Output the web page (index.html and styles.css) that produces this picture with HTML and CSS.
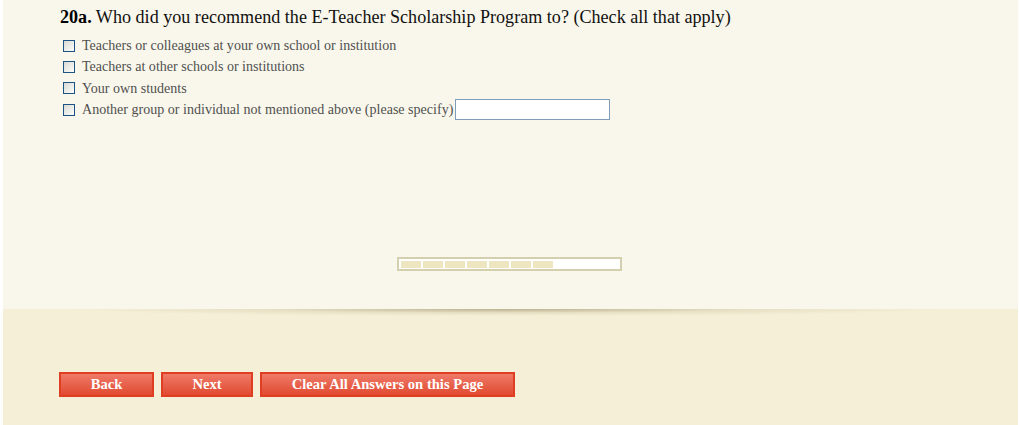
FILE: index.html
```html
<!DOCTYPE html>
<html>
<head>
<meta charset="utf-8">
<link rel="stylesheet" href="styles.css">
</head>
<body>
<div class="page">
  <div class="survey">
    <div class="question">
      <div class="qtitle"><b>20a.</b> Who did you recommend the E-Teacher Scholarship Program to? (Check all that apply)</div>
      <div class="options">
        <label class="opt"><span class="box"></span>Teachers or colleagues at your own school or institution</label>
        <label class="opt"><span class="box"></span>Teachers at other schools or institutions</label>
        <label class="opt"><span class="box"></span>Your own students</label>
        <label class="opt"><span class="box"></span>Another group or individual not mentioned above (please specify)<span class="textin"></span></label>
      </div>
    </div>
    <div class="progress">
      <span class="seg"></span><span class="seg"></span><span class="seg"></span><span class="seg"></span><span class="seg"></span><span class="seg"></span><span class="seg"></span>
    </div>
  </div>
  <div class="footer">
    <div class="shadow"></div>
    <div class="buttons">
      <span class="btn back">Back</span>
      <span class="btn next">Next</span>
      <span class="btn clear">Clear All Answers on this Page</span>
    </div>
  </div>
</div>
</body>
</html>
```

FILE: styles.css
```css
html, body {
  margin: 0;
  padding: 0;
  background: #ffffff;
  height: 425px;
  overflow: hidden;
}
.page {
  margin: 0 2px 0 3px;
  height: 425px;
  display: flex;
  flex-direction: column;
  font-family: "Liberation Serif", "Times New Roman", serif;
}
.survey {
  background: #f9f7eb;
  height: 309px;
  box-sizing: border-box;
  padding: 6px 0 0 57px;
  display: flex;
  flex-direction: column;
}
.qtitle {
  font-size: 18.1px;
  color: #111;
  line-height: 22px;
}
.qtitle b { color: #000; }
.options {
  margin-top: 7px;
  display: flex;
  flex-direction: column;
}
.opt {
  display: flex;
  align-items: center;
  height: 21.3px;
  font-size: 14.05px;
  color: #505050;
  padding-left: 3px;
}
.box {
  width: 10px;
  height: 10px;
  border: 1px solid #1d5384;
  background: linear-gradient(135deg, #d9d9d4, #fdfdfb);
  margin-right: 7px;
  flex: none;
}
.textin {
  display: inline-block;
  width: 153px;
  height: 19px;
  border: 1px solid #7f9db9;
  background: #fff;
  margin-left: 2px;
}
.progress {
  margin: 137px 0 0 337px;
  width: 219px;
  height: 10px;
  border: 2px solid #d4cfad;
  background: #fff;
  padding: 0 0 0 2px;
  display: flex;
  align-items: center;
  gap: 2px;
}
.seg {
  width: 20px;
  height: 7px;
  background: #ede6c1;
}
.footer {
  background: #f5efd7;
  flex: 1;
  display: flex;
  flex-direction: column;
}
.shadow {
  height: 7px;
  margin: 0 70px 0 60px;
  background: radial-gradient(ellipse 50% 100% at 50% 0, rgba(160, 150, 110, 0.7), rgba(190, 180, 140, 0.25) 55%, rgba(245, 239, 215, 0) 100%);
}
.buttons {
  margin-top: 56px;
  padding-left: 56px;
  display: flex;
  gap: 7px;
}
.btn {
  box-sizing: border-box;
  height: 25px;
  border: 2px solid #e03e22;
  background: linear-gradient(#ee7a68, #e14a30);
  color: #fff;
  font-weight: bold;
  font-size: 14.6px;
  display: flex;
  align-items: center;
  justify-content: center;
}
.back { width: 95px; }
.next { width: 92px; }
.clear { width: 255px; }
```
